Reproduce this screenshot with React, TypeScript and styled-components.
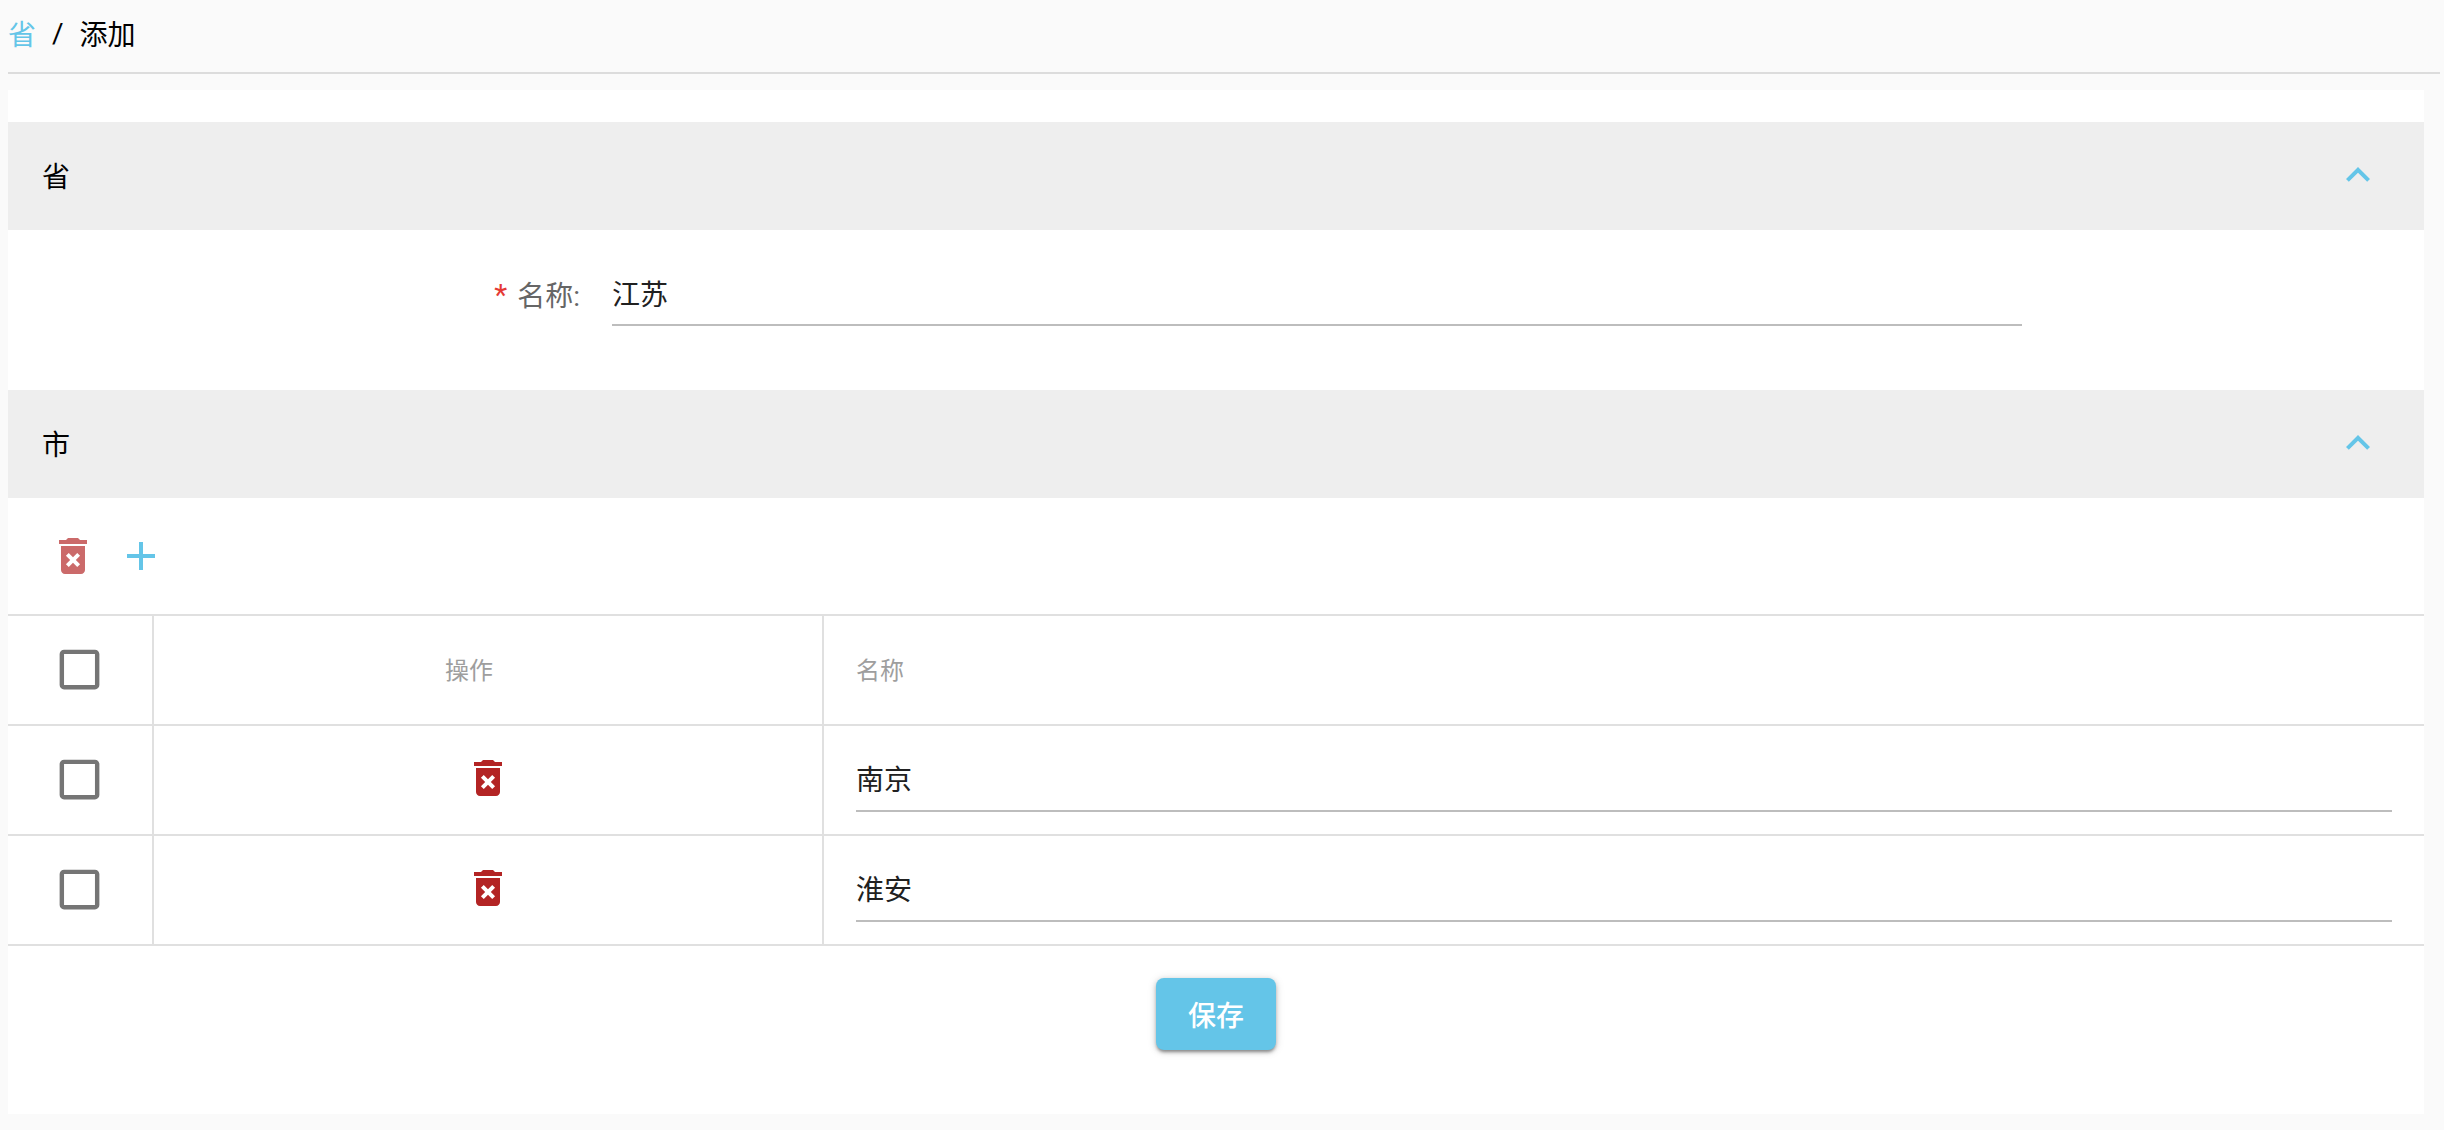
import React from "react";
import styled, { createGlobalStyle } from "styled-components";

const Global = createGlobalStyle`
  html, body { margin: 0; padding: 0; background: #fafafa; overflow: hidden; }
  body { font-family: Roboto, "Noto Sans CJK SC", sans-serif; color: #000; }
  * { box-sizing: border-box; }
`;

const Page = styled.div`
  height: 1130px;
  padding: 0 4px 16px 8px;
  display: flex;
  flex-direction: column;
`;
const Breadcrumb = styled.nav`
  height: 74px;
  flex: none;
  display: flex;
  align-items: center;
  border-bottom: 2px solid #dcdcdc;
  font-size: 28px;
  padding-bottom: 6px;
`;
const Crumb = styled.a`
  color: #64c5e8;
`;
const Separator = styled.span`
  margin: 0 16px;
`;
const Card = styled.main`
  flex: 1;
  margin: 16px 16px 0 0;
  padding-top: 32px;
  background: #fff;
  display: flex;
  flex-direction: column;
`;
const SectionHeader = styled.header`
  height: 108px;
  flex: none;
  background: #eeeeee;
  display: flex;
  align-items: center;
  justify-content: space-between;
  padding: 0 42px 2px 34px;
  font-size: 28px;
`;
const FormRow = styled.div`
  height: 160px;
  flex: none;
  display: grid;
  grid-template-columns: 604px 1410px;
  align-items: start;
  padding-top: 40px;
`;
const Label = styled.label`
  display: flex;
  justify-content: flex-end;
  align-items: center;
  height: 48px;
  padding-right: 32px;
  font-size: 28px;
  color: #666;
`;
const Required = styled.span`
  color: #e53935;
  font-size: 30px;
  margin-right: 10px;
`;
const TextInput = styled.input`
  display: block;
  width: 100%;
  height: 56px;
  border: 0;
  border-bottom: 2px solid #bdbdbd;
  outline: 0;
  padding: 0 0 8px;
  background: transparent;
  font: inherit;
  font-size: 28px;
  color: #212121;
`;
const Toolbar = styled.div`
  height: 116px;
  flex: none;
  display: flex;
  align-items: flex-start;
  padding: 34px 0 0 41px;
  gap: 20px;
`;
const IconSvg = styled.svg<{ $size?: number; $color: string; $faded?: boolean }>`
  display: block;
  flex: none;
  width: ${(p) => p.$size ?? 48}px;
  height: ${(p) => p.$size ?? 48}px;
  fill: ${(p) => p.$color};
  opacity: ${(p) => (p.$faded ? 0.68 : 1)};
`;
const Table = styled.div`
  display: grid;
  grid-template-columns: 146px 670px 1fr;
  border-top: 2px solid #e0e0e0;
`;
const Cell = styled.div<{ $center?: boolean; $last?: boolean }>`
  height: 110px;
  display: flex;
  align-items: center;
  justify-content: ${(p) => (p.$center ? "center" : "flex-start")};
  border-bottom: 2px solid #e0e0e0;
  border-right: ${(p) => (p.$last ? "0" : "2px solid #e0e0e0")};
  padding: ${(p) => (p.$last ? "0 32px" : "0")};
`;
const HeadText = styled.span<{ $shift?: boolean }>`
  font-size: 24px;
  font-weight: 400;
  color: #9e9e9e;
  margin: 0 ${(p) => (p.$shift ? "38px" : "0")} 4px 0;
`;
const RowInput = styled(TextInput)`
  height: 56px;
  margin-top: 8px;
  padding: 0 0 10px;
`;
const TrashButton = styled.div`
  margin-top: -4px;
`;
const Footer = styled.div`
  display: flex;
  justify-content: center;
  padding-top: 32px;
`;
const SaveButton = styled.button`
  width: 120px;
  height: 72px;
  border: 0;
  border-radius: 8px;
  background: #64c5e8;
  color: #fff;
  font: inherit;
  font-size: 28px;
  font-weight: 500;
  box-shadow: 0 3px 3px -1px rgba(0,0,0,.3), 0 2px 5px 0 rgba(0,0,0,.18), 0 1px 10px 0 rgba(0,0,0,.14);
`;
const CheckSlot = styled.div`
  margin: -2px 1px 0 0;
`;

const TRASH = "M6 19c0 1.1.9 2 2 2h8c1.1 0 2-.9 2-2V7H6v12zm2.46-7.12l1.41-1.41L12 12.59l2.12-2.12 1.41 1.41L13.41 14l2.12 2.12-1.41 1.41L12 15.41l-2.12 2.12-1.41-1.41L10.59 14l-2.13-2.12zM15.5 4l-1-1h-5l-1 1H5v2h14V4z";
const PLUS = "M19 13h-6v6h-2v-6H5v-2h6V5h2v6h6v2z";
const CHEVRON = "M12 8l-6 6 1.41 1.41L12 10.83l4.59 4.58L18 14z";
const BOX = "M19 5v14H5V5h14m0-2H5c-1.1 0-2 .9-2 2v14c0 1.1.9 2 2 2h14c1.1 0 2-.9 2-2V5c0-1.1-.9-2-2-2z";

const Icon = ({ d, color, size, faded }: { d: string; color: string; size?: number; faded?: boolean }) => (
  <IconSvg viewBox="0 0 24 24" $color={color} $size={size} $faded={faded}>
    <path d={d} />
  </IconSvg>
);

const Section = ({ title }: { title: string }) => (
  <SectionHeader>
    <span>{title}</span>
    <Icon d={CHEVRON} color="#64c5e8" />
  </SectionHeader>
);

const Checkbox = () => (
  <CheckSlot>
    <Icon d={BOX} color="#757575" size={53} />
  </CheckSlot>
);

const cities = ["南京", "淮安"];

export default function App() {
  return (
    <>
      <Global />
      <Page>
        <Breadcrumb>
          <Crumb>省</Crumb>
          <Separator>/</Separator>
          <span>添加</span>
        </Breadcrumb>
        <Card>
          <Section title="省" />
          <FormRow>
            <Label>
              <Required>*</Required>名称:
            </Label>
            <TextInput defaultValue="江苏" />
          </FormRow>
          <Section title="市" />
          <Toolbar>
            <Icon d={TRASH} color="#b32424" faded />
            <Icon d={PLUS} color="#64c5e8" />
          </Toolbar>
          <Table>
            <Cell $center>
              <Checkbox />
            </Cell>
            <Cell $center>
              <HeadText $shift>操作</HeadText>
            </Cell>
            <Cell $last>
              <HeadText>名称</HeadText>
            </Cell>
            {cities.map((city) => (
              <React.Fragment key={city}>
                <Cell $center>
                  <Checkbox />
                </Cell>
                <Cell $center>
                  <TrashButton>
                    <Icon d={TRASH} color="#b32424" />
                  </TrashButton>
                </Cell>
                <Cell $last>
                  <RowInput defaultValue={city} />
                </Cell>
              </React.Fragment>
            ))}
          </Table>
          <Footer>
            <SaveButton>保存</SaveButton>
          </Footer>
        </Card>
      </Page>
    </>
  );
}
